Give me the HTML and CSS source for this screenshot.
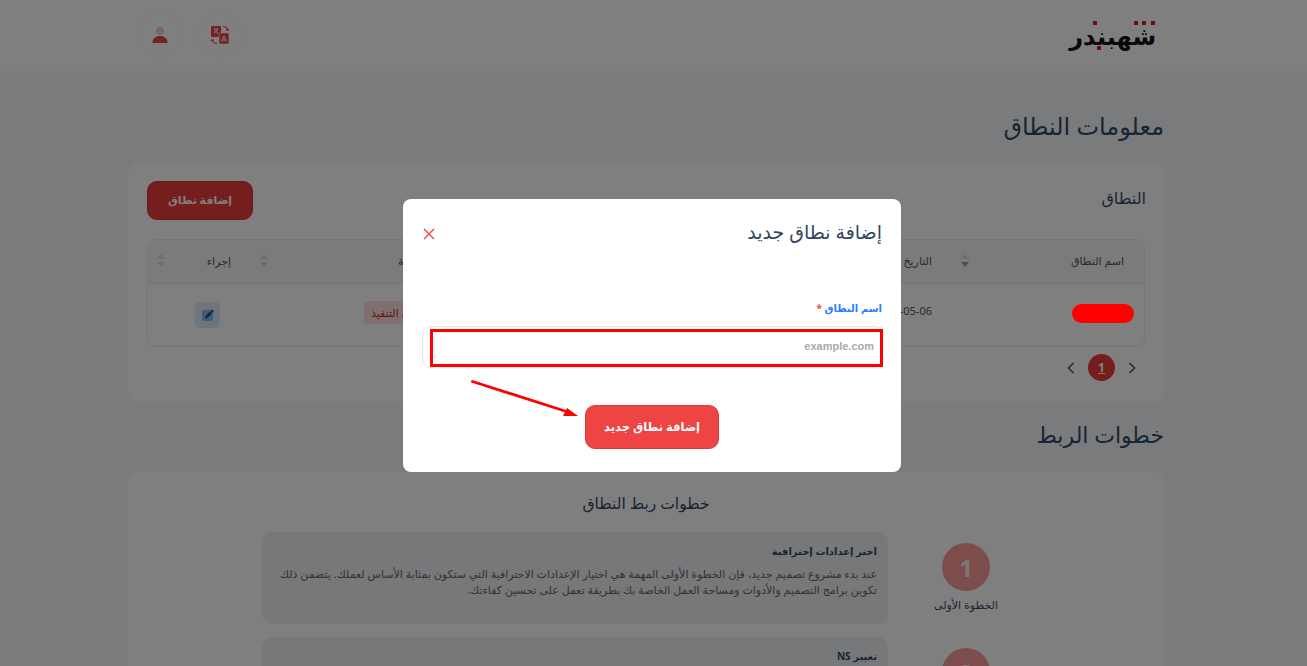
FILE: index.html
```html
<!DOCTYPE html>
<html lang="ar" dir="rtl">
<head>
  <meta charset="UTF-8" />
  <meta name="viewport" content="width=device-width, initial-scale=1.0" />
  <title>معلومات النطاق</title>
  <link rel="stylesheet" href="styles.css">
</head>
<body>
  <header class="topbar">
    <div class="logo">
      <span class="logo-text">شهبندر</span>
      <i class="logo-dot dot-a"></i>
      <i class="logo-dot dot-b"></i>
      <i class="logo-dot dot-c"></i>
      <i class="logo-dot dot-d"></i>
      <i class="logo-dot dot-e"></i>
    </div>
    <div class="top-actions">
      <button class="round-btn" aria-label="language">
        <svg width="20" height="20" viewBox="0 0 20 20">
          <rect x="1" y="1" width="10" height="11" rx="1" fill="#ef4444"/>
          <rect x="9" y="8" width="10" height="11" rx="1" fill="#ef4444" stroke="#fff" stroke-width=".6"/>
          <path d="M4 4h4M6 4v1M4 8l4-3M4.500 5.500 8 8" stroke="#fff" stroke-width="1" fill="none"/>
          <path d="M11.500 16.500 14 11l2.500 5.500M12.500 15h3" stroke="#fff" stroke-width="1" fill="none"/>
          <path d="M13 1.500c2.500 0 4.500 1.500 5 4M18 5.500l1-1.500M18 5.500l-1.800-.8" stroke="#ef4444" stroke-width="1.100" fill="none"/>
          <path d="M7 18.500c-2.500 0-4.500-1.500-5-4M2 14.500l-1 1.500M2 14.500l1.800.8" stroke="#ef4444" stroke-width="1.100" fill="none"/>
        </svg>
      </button>
      <button class="round-btn" aria-label="account">
        <svg width="16" height="18" viewBox="0 0 16 18">
          <circle cx="8" cy="5" r="4" fill="#fbc4c4"/>
          <path d="M.5 16.500c0-4 3-6.500 7.500-6.500s7.500 2.500 7.500 6.500c0 .4-.2.6-.6.600H1.100c-.4 0-.6-.2-.6-.6z" fill="#ef4444"/>
        </svg>
      </button>
    </div>
  </header>

  <main class="page">
    <h1 class="page-title first">معلومات النطاق</h1>
    <section class="card domain-card">
      <div class="card-head">
        <h2>النطاق</h2>
        <button class="btn-add">إضافة نطاق</button>
      </div>
      <div class="table-wrap">
        <table class="domains">
          <thead>
            <tr>
              <th class="col-name"><div class="th-in"><span>اسم النطاق</span><span class="sort active"></span></div></th>
              <th class="col-date"><div class="th-in"><span>التاريخ</span><span class="sort"></span></div></th>
              <th class="col-status"><div class="th-in"><span>الحالة</span><span class="sort"></span></div></th>
              <th class="col-action"><div class="th-in"><span>إجراء</span><span class="sort"></span></div></th>
            </tr>
          </thead>
          <tbody>
            <tr>
              <td><span class="redact"></span></td>
              <td class="date-cell">2025-05-06</td>
              <td class="status-cell"><span class="chip">قيد التنفيذ</span></td>
              <td class="action-cell">
                <button class="edit-btn" aria-label="edit">
                  <svg width="14" height="14" viewBox="0 0 14 14">
                    <rect x="1" y="2" width="11" height="11" rx="2" fill="#8fb4e6"/>
                    <path d="M4 10.500l.5-2.500 4.500-4.500 2 2-4.500 4.500zM9.700 2.800l.9-.9c.3-.3.7-.3 1 0l.9.9c.3.3.3.7 0 1l-.9.9z" fill="#0b4fae"/>
                  </svg>
                </button>
              </td>
            </tr>
          </tbody>
        </table>
      </div>
      <nav class="pager">
        <svg class="chev" width="10" height="14" viewBox="0 0 10 14"><path d="M2.500 2l5 5-5 5" fill="none" stroke="#45505f" stroke-width="1.500"/></svg>
        <span class="page-num">1</span>
        <svg class="chev" width="10" height="14" viewBox="0 0 10 14"><path d="M7.500 2l-5 5 5 5" fill="none" stroke="#45505f" stroke-width="1.500"/></svg>
      </nav>
    </section>

    <h1 class="page-title second">خطوات الربط</h1>
    <section class="card steps-card">
      <h2 class="steps-title">خطوات ربط النطاق</h2>
      <div class="step">
        <div class="step-mark">
          <span class="step-circle">1</span>
          <span class="step-label">الخطوة الأولى</span>
        </div>
        <div class="step-box">
          <h3>اختر إعدادات إحترافية</h3>
          <p>عند بدء مشروع تصميم جديد، فإن الخطوة الأولى المهمة هي اختيار الإعدادات الاحترافية التي ستكون بمثابة الأساس لعملك. يتضمن ذلك تكوين برامج التصميم والأدوات ومساحة العمل الخاصة بك بطريقة تعمل على تحسين كفاءتك.</p>
        </div>
      </div>
      <div class="step">
        <div class="step-mark">
          <span class="step-circle">2</span>
        </div>
        <div class="step-box">
          <h3>تغيير NS</h3>
        </div>
      </div>
    </section>
  </main>

  <div class="overlay"></div>

  <div class="modal">
    <div class="modal-head">
      <h2>إضافة نطاق جديد</h2>
      <button class="close" aria-label="close">
        <svg width="14" height="14" viewBox="0 0 14 14"><path d="M2 2l10 10M12 2 2 12" stroke="#ef4444" stroke-width="1.400"/></svg>
      </button>
    </div>
    <label class="field-label" for="domain">اسم النطاق <span class="star">*</span></label>
    <div class="field">
      <input id="domain" type="text" placeholder="example.com" />
      <span class="mark-box"></span>
    </div>
    <div class="modal-foot">
      <button class="btn-submit">إضافة نطاق جديد</button>
    </div>
    <svg class="mark-arrow" width="112" height="38" viewBox="0 0 112 38">
      <path d="M1.500 1.500 97 32" stroke="#f00" stroke-width="2.800" stroke-linecap="round"/>
      <path d="M107 36H92l4-8z" fill="#f00"/>
    </svg>
  </div>
</body>
</html>
```

FILE: styles.css
```css
* {
  box-sizing: border-box;
}
html, body {
  height: 666px;
  overflow: hidden;
}
body {
  margin: 0;
  background: #f5f6f8;
  font-family: "Noto Sans", "DejaVu Sans", sans-serif;
  color: #2f4a6a;
}
h1, h2, h3, p {
  margin: 0;
  font-weight: normal;
}
button {
  font-family: inherit;
  cursor: pointer;
  border: none;
  padding: 0;
  background: none;
}

/* header */
.topbar {
  height: 71px;
  background: #fff;
  display: flex;
  justify-content: space-between;
  align-items: center;
  padding: 0 151px 2px 138px;
}
.logo {
  position: relative;
  width: 84px;
  height: 28px;
  text-align: center;
  margin-top: 2px;
}
.logo-text {
  font-size: 24px;
  line-height: 28px;
  font-weight: bold;
  color: #111;
  white-space: nowrap;
}
.logo-dot {
  position: absolute;
  width: 4px;
  height: 4px;
  background: #e01b1b;
}
.dot-a { top: -1px; right: 1px; }
.dot-b { top: -1px; right: 10px; }
.dot-c { top: -1px; right: 18px; }
.dot-d { top: -1px; right: 59px; }
.dot-e { top: 24px; right: 55px; }
.top-actions {
  display: flex;
  gap: 16px;
}
.round-btn {
  width: 44px;
  height: 44px;
  border-radius: 50%;
  border: 1px solid #fafafa;
  display: flex;
  align-items: center;
  justify-content: center;
}

/* page */
.page {
  padding: 0 143px 0 128px;
}
.page-title {
  font-size: 22px;
  line-height: 30px;
  color: #2f4a6a;
}
.page-title.first {
  font-size: 24px;
  margin-top: 40px;
  margin-bottom: 21px;
}
.page-title.second {
  margin-top: 17px;
  margin-bottom: 23px;
}
.card {
  background: #fff;
  border-radius: 10px;
}
.domain-card {
  height: 240px;
  padding: 19px 19px 0;
}
.card-head {
  display: flex;
  justify-content: space-between;
  align-items: flex-start;
  height: 39px;
}
.card-head h2 {
  font-size: 16px;
  line-height: 34px;
  margin-right: -1px;
}
.btn-add {
  width: 106px;
  height: 39px;
  padding-bottom: 3px;
  background: #e83c3c;
  color: #fff;
  font-size: 11px;
  font-weight: bold;
  border-radius: 10px;
  border: 1px solid #d33;
}
.table-wrap {
  margin-top: 19px;
  border: 1px solid #e6e8ec;
  border-radius: 10px;
  overflow: hidden;
}
.domains {
  width: 100%;
  border-collapse: collapse;
  table-layout: fixed;
  font-size: 11px;
  color: #555;
}
.domains th {
  height: 43px;
  background: #f4f6f9;
  font-weight: normal;
  border-bottom: 1px solid #e6e8ec;
  padding: 0 20px 2px 9px;
}
.th-in {
  display: flex;
  justify-content: space-between;
  align-items: center;
}
.col-name { width: 192px; }
.col-date { width: 302px; }
.col-action { width: 103px; }
.col-status .th-in span:first-child {
  margin-right: auto;
  margin-left: 130px;
}
.domains td {
  height: 63px;
  padding: 0 10px 3px;
  vertical-align: middle;
}
.redact {
  position: relative;
  z-index: 30;
  display: block;
  width: 62px;
  height: 19px;
  border-radius: 10px;
  background: #f00;
}
.domains td.date-cell {
  padding: 0 20px 8px 0;
}
.domains td.status-cell {
  text-align: left;
  padding: 0 0 4px 113px;
}
.chip {
  display: inline-block;
  padding: 4px 7px;
  background: #fde0e0;
  color: #d42020;
  border-radius: 4px;
  font-size: 11px;
}
.domains td.action-cell {
  text-align: right;
  padding: 0 31px 0 0;
}
.edit-btn {
  width: 25px;
  height: 26px;
  border-radius: 5px;
  background: #deeaf9;
  display: inline-flex;
  align-items: center;
  justify-content: center;
}

/* sort arrows */
.sort {
  display: block;
  width: 8px;
  height: 13px;
  position: relative;
}
.sort::before, .sort::after {
  content: "";
  position: absolute;
  left: 0;
  border-left: 4px solid transparent;
  border-right: 4px solid transparent;
}
.sort::before {
  top: 0;
  border-bottom: 5px solid #d8dadd;
}
.sort::after {
  bottom: 0;
  border-top: 5px solid #d8dadd;
}
.sort.active::after {
  border-top-color: #9a9ca0;
}

/* pager */
.pager {
  display: flex;
  align-items: center;
  gap: 12px;
  margin-top: 7px;
  padding-right: 8px;
}
.page-num {
  width: 27px;
  height: 27px;
  border-radius: 50%;
  background: #e83c3c;
  color: #fff;
  font-size: 12px;
  font-weight: bold;
  text-decoration: underline;
  display: flex;
  align-items: center;
  justify-content: center;
}

/* steps */
.steps-card {
  height: 300px;
  padding: 20px 0 0;
  overflow: hidden;
}
.steps-title {
  text-align: center;
  font-size: 15.5px;
  line-height: 22px;
  margin-bottom: 18px;
  color: #2f4a6a;
}
.step {
  display: flex;
  margin: 0 0 13px;
  padding: 0 120px 0 0;
}
.step-mark {
  width: 156px;
  flex: none;
  display: flex;
  flex-direction: column;
  align-items: center;
  padding-top: 11px;
}
.step-circle {
  width: 48px;
  height: 48px;
  border-radius: 50%;
  background: #fb9a9a;
  color: #f3f3f3;
  font-size: 24px;
  font-weight: bold;
  display: flex;
  align-items: center;
  justify-content: center;
}
.step-label {
  font-size: 11px;
  line-height: 14px;
  margin-top: 7px;
}
.step-box {
  width: 626px;
  height: 92px;
  background: #eef0f2;
  border-radius: 10px;
  padding: 12px 11px 0 10px;
}
.step-box h3 {
  font-size: 10px;
  line-height: 14px;
  font-weight: bold;
  margin-bottom: 8px;
}
.step-box p {
  font-size: 11px;
  line-height: 16px;
  color: #666;
}

/* modal */
.overlay {
  position: fixed;
  inset: 0;
  z-index: 10;
  background: rgba(0, 0, 0, 0.5);
}
.modal {
  position: fixed;
  z-index: 20;
  left: 403px;
  top: 199px;
  width: 498px;
  height: 273px;
  background: #fff;
  border-radius: 8px;
  padding: 21px 19px 0;
}
.modal-head {
  display: flex;
  justify-content: space-between;
  align-items: center;
  height: 24px;
  margin-bottom: 57px;
}
.modal-head h2 {
  font-size: 19px;
  color: #33475f;
}
.close {
  display: flex;
  margin-top: 4px;
}
.field-label {
  display: block;
  font-size: 10px;
  line-height: 14px;
  font-weight: bold;
  color: #2b7fff;
  margin-bottom: 11px;
}
.star {
  color: #ef4444;
}
.field {
  position: relative;
  height: 42px;
  margin-right: -1px;
}
.field input {
  width: 100%;
  height: 100%;
  border: 1px solid #e8e8e8;
  border-radius: 8px;
  padding: 0 8px 2px;
  outline: none;
  background: #fff;
  font-family: "Liberation Sans", sans-serif;
  font-size: 11px;
  font-weight: bold;
}
.field input::placeholder {
  color: #aaa;
  opacity: 1;
}
.mark-box {
  position: absolute;
  top: 3px;
  right: 0;
  width: 453px;
  height: 38px;
  border: 3px solid #f00;
}
.modal-foot {
  display: flex;
  justify-content: center;
  margin-top: 37px;
}
.btn-submit {
  width: 134px;
  height: 44px;
  padding-bottom: 2px;
  background: #ef4444;
  color: #fff;
  font-size: 11.5px;
  font-weight: bold;
  border-radius: 10px;
  border: 1px solid #d93a3a;
}
.mark-arrow {
  position: absolute;
  left: 68px;
  top: 181px;
}
```
